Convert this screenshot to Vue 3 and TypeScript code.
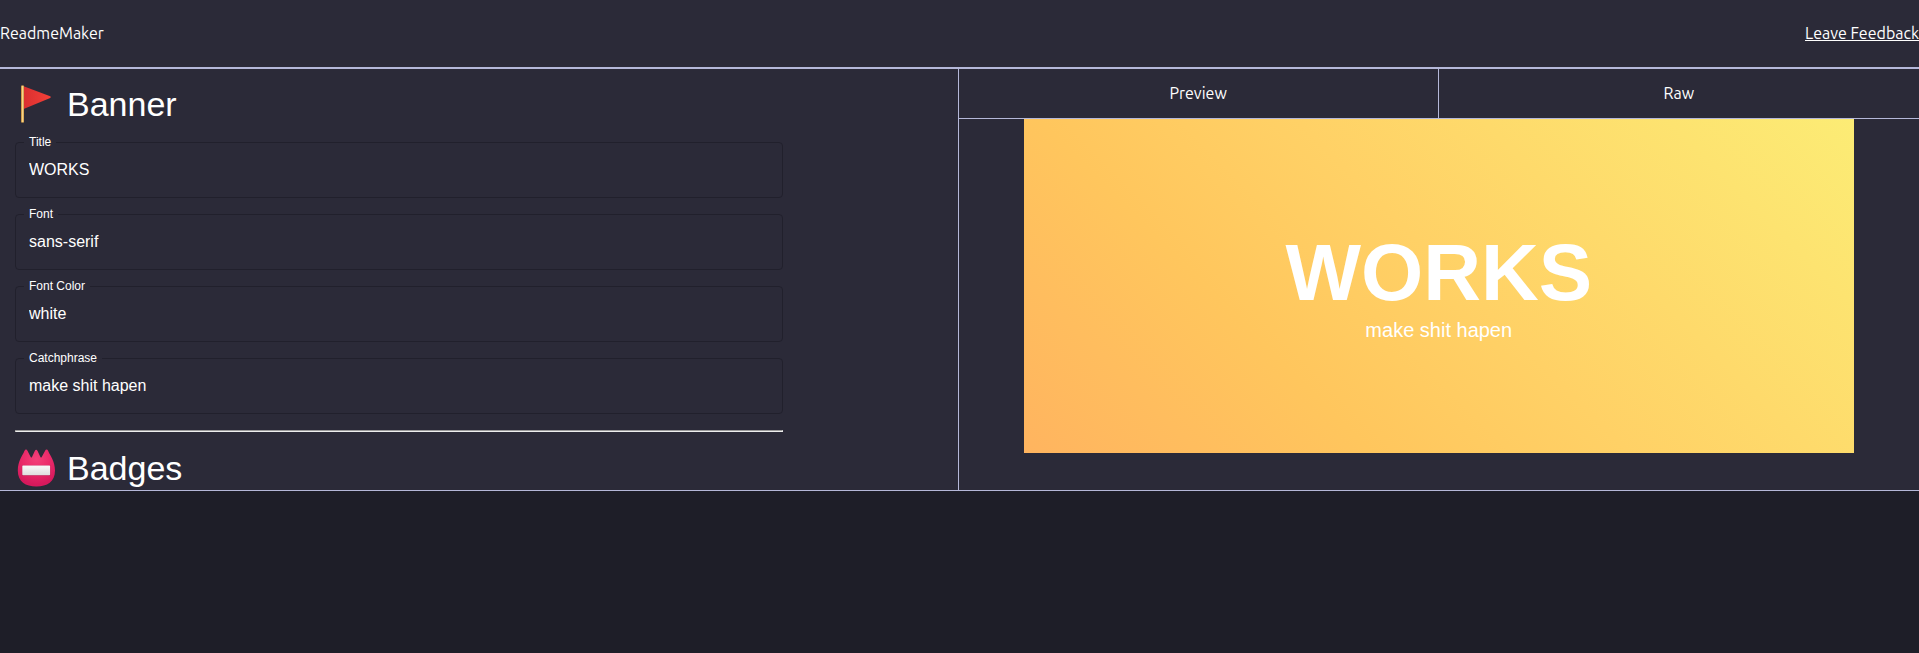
<script setup lang="ts">
import { reactive, ref } from 'vue'

interface Field {
  key: 'title' | 'font' | 'color' | 'catchphrase'
  label: string
}

const fields: Field[] = [
  { key: 'title', label: 'Title' },
  { key: 'font', label: 'Font' },
  { key: 'color', label: 'Font Color' },
  { key: 'catchphrase', label: 'Catchphrase' },
]

const banner = reactive({
  title: 'WORKS',
  font: 'sans-serif',
  color: 'white',
  catchphrase: 'make shit hapen',
})

const tab = ref<'preview' | 'raw'>('preview')
</script>

<template>
  <div class="app">
    <header class="topbar">
      <span>ReadmeMaker</span>
      <a href="#feedback">Leave Feedback</a>
    </header>
    <main class="workspace">
      <section class="editor">
        <div class="form">
          <h2 class="heading">
            <svg class="emoji" viewBox="0 0 38 38" aria-hidden="true">
              <defs>
                <linearGradient id="flag-red">
                  <stop offset="0" stop-color="#d92f30" />
                  <stop offset="1" stop-color="#f44038" />
                </linearGradient>
              </defs>
              <path d="M6 1 33.2 11.2Q34.6 12 33.2 12.9L6 24.2Z" fill="url(#flag-red)" />
              <rect x="4" y="0.5" width="3" height="37" rx="0.6" fill="#cf9a48" />
              <rect x="5" y="0.8" width="1.3" height="36.4" fill="#f7d486" />
            </svg>
            Banner
          </h2>
          <div v-for="field in fields" :key="field.key" class="field">
            <label :for="field.key">{{ field.label }}</label>
            <input :id="field.key" v-model="banner[field.key]" type="text" autocomplete="off" spellcheck="false" />
          </div>
          <hr />
          <h2 class="heading">
            <svg class="emoji" viewBox="0 0 38 38" aria-hidden="true">
              <defs>
                <radialGradient id="badge-pink" cx="0.5" cy="0.25" r="0.7">
                  <stop offset="0" stop-color="#f34079" />
                  <stop offset="0.5" stop-color="#eb2b6a" />
                  <stop offset="1" stop-color="#d6195c" />
                </radialGradient>
                <linearGradient id="badge-plate" x1="0" y1="0" x2="0" y2="1">
                  <stop offset="0" stop-color="#fafafa" />
                  <stop offset="1" stop-color="#dedede" />
                </linearGradient>
              </defs>
              <path
                d="M7.4 2C8.4 0.1 9.6 0.1 10.6 2L13.8 8.3Q14.4 9 15 8.1L17.8 2Q19.2 -0.6 20.6 2L23.4 8.1Q24 9 24.6 8.3L28 2C29 0.1 30.2 0.1 31.2 2C33.2 7 38 12 38 21.5C38 33 30.2 37.5 19.4 37.5C8.6 37.5 0.8 33 0.8 21.5C0.8 12 5.4 7 7.4 2Z"
                fill="url(#badge-pink)"
              />
              <rect x="4.9" y="16.3" width="28.6" height="10.6" rx="0.8" fill="#a81348" opacity="0.55" />
              <rect x="5.3" y="16.4" width="27.8" height="9.8" rx="0.6" fill="url(#badge-plate)" />
            </svg>
            Badges
          </h2>
        </div>
      </section>
      <section class="output">
        <nav class="tabs" role="tablist">
          <button type="button" role="tab" :aria-selected="tab === 'preview'" @click="tab = 'preview'">Preview</button>
          <button type="button" role="tab" :aria-selected="tab === 'raw'" @click="tab = 'raw'">Raw</button>
        </nav>
        <div v-if="tab === 'preview'" class="banner" :style="{ color: banner.color }">
          <h1>{{ banner.title }}</h1>
          <p>{{ banner.catchphrase }}</p>
        </div>
        <pre v-else class="raw"># {{ banner.title }}

{{ banner.catchphrase }}</pre>
      </section>
    </main>
  </div>
</template>

<style>
html,
body {
  margin: 0;
  background: #1e1e28;
}
</style>

<style scoped>
.app {
  --line: #b5b8d9;
  --panel: #2b2a38;
  color: #fff;
  font: 16px/24px Ubuntu, 'Noto Sans', sans-serif;
}

.topbar {
  display: flex;
  align-items: center;
  justify-content: space-between;
  height: 65px;
  padding-bottom: 2px;
  border-bottom: 2px solid var(--line);
  background: var(--panel);
}

.topbar a {
  color: inherit;
}

.workspace {
  display: grid;
  grid-template-columns: calc(50% - 2px) 1fr;
  border-bottom: 1px solid var(--line);
  background: var(--panel);
}

/* The editor scrolls inside the height given by the preview column. */
.editor {
  contain: size;
  overflow-y: auto;
  scrollbar-width: none;
  font-family: 'Liberation Sans', Arial, sans-serif;
}

.form {
  display: flex;
  flex-direction: column;
  gap: 16px;
  box-sizing: border-box;
  width: calc(80% + 32px);
  padding: 15px;
}

.heading {
  display: flex;
  align-items: center;
  gap: 12px;
  margin: -1px 0 1px;
  padding-left: 2px;
  font-size: 34px;
  font-weight: 400;
  line-height: 42px;
}

.emoji {
  width: 38px;
  height: 38px;
}

.field {
  position: relative;
  display: flex;
}

.field label {
  position: absolute;
  top: -7px;
  left: 9px;
  padding: 0 5px;
  background: var(--panel);
  font-size: 12px;
  line-height: 14px;
}

.field input {
  box-sizing: border-box;
  width: 100%;
  height: 56px;
  padding: 0 13px;
  border: 1px solid #21202c;
  border-radius: 4px;
  outline: none;
  background: transparent;
  color: inherit;
  font: inherit;
}

hr {
  width: 100%;
  box-sizing: border-box;
  margin: 0;
  border: 1px solid;
  border-color: #9a9a9a #eee #eee #9a9a9a;
}

.output {
  border-left: 1px solid var(--line);
  padding-bottom: 37px;
}

.tabs {
  display: grid;
  grid-template-columns: 1fr 1fr;
  border-bottom: 1px solid var(--line);
}

.tabs button {
  height: 49px;
  padding: 0 0 2px;
  border: 0;
  background: none;
  color: inherit;
  font: inherit;
  cursor: pointer;
}

.tabs button:first-child {
  border-right: 1px solid var(--line);
}

.banner {
  display: flex;
  flex-direction: column;
  align-items: center;
  justify-content: center;
  gap: 5px;
  box-sizing: border-box;
  aspect-ratio: 830 / 334;
  margin: 0 65px;
  padding-top: 3px;
  background: linear-gradient(45deg, #ffb45f, #ffc65d 30%, #ffd166 52%, #fcec75);
  font-family: 'Liberation Sans', Arial, sans-serif;
}

.banner h1 {
  margin: 0;
  font-size: 80px;
  line-height: 80px;
}

.banner p {
  margin: 0;
  font-size: 20px;
}

.raw {
  margin: 16px 65px;
}
</style>
